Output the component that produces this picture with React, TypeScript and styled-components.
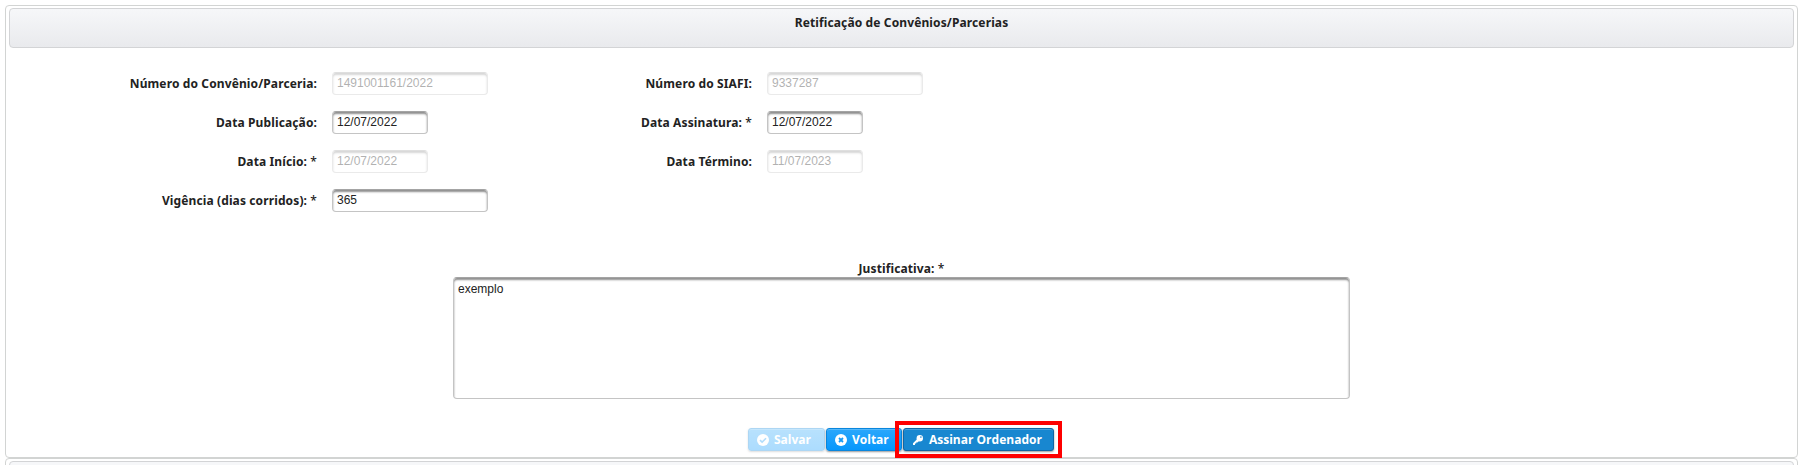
import React from 'react';
import styled, { createGlobalStyle } from 'styled-components';

const Global = createGlobalStyle`
  * { box-sizing: border-box; }
  body { margin: 0; background: #fff; overflow: hidden; font-family: "Noto Sans", sans-serif; color: #222; }
`;

const Page = styled.main`
  height: 465px;
  overflow: hidden;
  padding: 5px 6px 0 5px;
`;

const Panel = styled.section`
  height: 453px;
  border: 1px solid #d2d4d3;
  border-radius: 4px;
  padding: 2px 3px;
  background: #fff;
`;

const PanelHeader = styled.header<{ $plain?: boolean }>`
  height: 40px;
  border: 1px solid #d3d4d6;
  border-radius: 4px;
  background: ${p => (p.$plain ? '#f6f7f9' : 'linear-gradient(#f6f7f9, #e9eaed)')};
  padding-top: 1px;
  text-align: center;
`;

const Form = styled.div`
  display: flex;
  padding-top: 24px;
  height: 209px;
`;

const Column = styled.div<{ $label: number }>`
  display: grid;
  grid-template-columns: ${p => p.$label}px auto;
  grid-auto-rows: 23px;
  row-gap: 16px;
  column-gap: 15px;
  align-content: start;
  justify-content: start;
`;

const Label = styled.label`
  font-size: 12px;
  font-weight: 700;
  letter-spacing: 0.12px;
  line-height: 23px;
  text-align: right;
  white-space: nowrap;
`;

const Required = styled.span`
  font-size: 12px;
  font-weight: 500;
`;

const Input = styled.input<{ $short?: boolean }>`
  width: ${p => (p.$short ? 96 : 156)}px;
  height: 23px;
  border: 1px solid #c4c4c4;
  border-top-color: #a4a4a4;
  border-radius: 4px;
  box-shadow: inset 0 2px 2px #8f8f8f;
  padding: 0 4px 2px;
  background: #fff;
  color: #222;
  font: 12px "Liberation Sans", Arial, sans-serif;
  outline: 0;
  &:disabled { opacity: .35; }
`;

const Justification = styled.div`
  display: flex;
  flex-direction: column;
  align-items: center;
`;

const TextArea = styled.textarea`
  width: 897px;
  height: 122px;
  margin-top: -3px;
  resize: none;
  border: 1px solid #c4c4c4;
  border-top-color: #a4a4a4;
  border-radius: 4px;
  box-shadow: inset 0 2px 2px #8f8f8f;
  padding: 4px;
  color: #222;
  font: 12px/14px "Liberation Sans", Arial, sans-serif;
  outline: 0;
`;

const Actions = styled.div`
  display: flex;
  gap: 1px;
  padding: 29px 0 0 739px;
`;

const Button = styled.button<{ $width: number; $dark?: boolean }>`
  display: flex;
  align-items: center;
  gap: 5px;
  width: ${p => p.$width}px;
  height: 23px;
  padding: 0 0 0 8px;
  border: 1px solid ${p => (p.$dark ? '#1266a3' : '#0a86dc')};
  border-radius: 3px;
  background: ${p => (p.$dark ? '#1887d0' : 'linear-gradient(#2ba7fb, #0797fc)')};
  box-shadow: inset 0 1px 0 rgba(255,255,255,.2), 0 1px 2px rgba(0,0,0,.4);
  color: #fff;
  font: 700 12px "Open Sans", sans-serif;
  white-space: nowrap;
  &:disabled { opacity: .33; }
`;

const Highlighted = styled.div`
  position: relative;
  &::after {
    content: '';
    position: absolute;
    inset: -7px -8px;
    border: 4px solid #fe0000;
    pointer-events: none;
  }
`;

const Icon = styled.svg`
  width: 12px;
  height: 12px;
  flex: none;
`;

const CheckIcon = () => (
  <Icon viewBox="0 0 12 12"><circle cx="6" cy="6" r="6" fill="#fff" /><path d="M3 6.2 5.1 8.2 9 4.2" fill="none" stroke="#1699f5" strokeWidth="1.6" /></Icon>
);
const CloseIcon = () => (
  <Icon viewBox="0 0 12 12"><circle cx="6" cy="6" r="6" fill="#fff" /><path d="m4 4 4 4m0-4L4 8" stroke="#1699f5" strokeWidth="1.8" /></Icon>
);
const KeyIcon = () => (
  <Icon viewBox="0 0 12 12">
    <path d="M1 11V9.2L5 5.2 7 7 5.4 8.4H4.2V9.6H3V11Z" fill="#fff" />
    <circle cx="7.8" cy="4.2" r="3.2" fill="#fff" />
    <circle cx="8.9" cy="3.1" r=".8" fill="#1887d0" />
  </Icon>
);

type Field = { label: string; value: string; short?: boolean; disabled?: boolean; required?: boolean };
const left: Field[] = [
  { label: 'Número do Convênio/Parceria:', value: '1491001161/2022', disabled: true },
  { label: 'Data Publicação:', value: '12/07/2022', short: true },
  { label: 'Data Início:', value: '12/07/2022', short: true, disabled: true, required: true },
  { label: 'Vigência (dias corridos):', value: '365', required: true },
];
const right: Field[] = [
  { label: 'Número do SIAFI:', value: '9337287', disabled: true },
  { label: 'Data Assinatura:', value: '12/07/2022', short: true, required: true },
  { label: 'Data Término:', value: '11/07/2023', short: true, disabled: true },
];

const FieldColumn = ({ fields, label }: { fields: Field[]; label: number }) => (
  <Column $label={label}>
    {fields.map(f => (
      <React.Fragment key={f.label}>
        <Label>{f.label}{f.required && <Required> *</Required>}</Label>
        <Input $short={f.short} disabled={f.disabled} defaultValue={f.value} />
      </React.Fragment>
    ))}
  </Column>
);

export default function App() {
  return (
    <Page>
      <Global />
      <Panel>
        <PanelHeader><Label>Retificação de Convênios/Parcerias</Label></PanelHeader>
        <Form>
          <FieldColumn fields={left} label={308} />
          <FieldColumn fields={right} label={264} />
        </Form>
        <Justification>
          <Label>Justificativa:<Required> *</Required></Label>
          <TextArea defaultValue="exemplo" />
        </Justification>
        <Actions>
          <Button $width={77} disabled><CheckIcon />Salvar</Button>
          <Button $width={76}><CloseIcon />Voltar</Button>
          <Highlighted><Button $width={151} $dark><KeyIcon />Assinar Ordenador</Button></Highlighted>
        </Actions>
      </Panel>
      <Panel><PanelHeader $plain /></Panel>
    </Page>
  );
}
